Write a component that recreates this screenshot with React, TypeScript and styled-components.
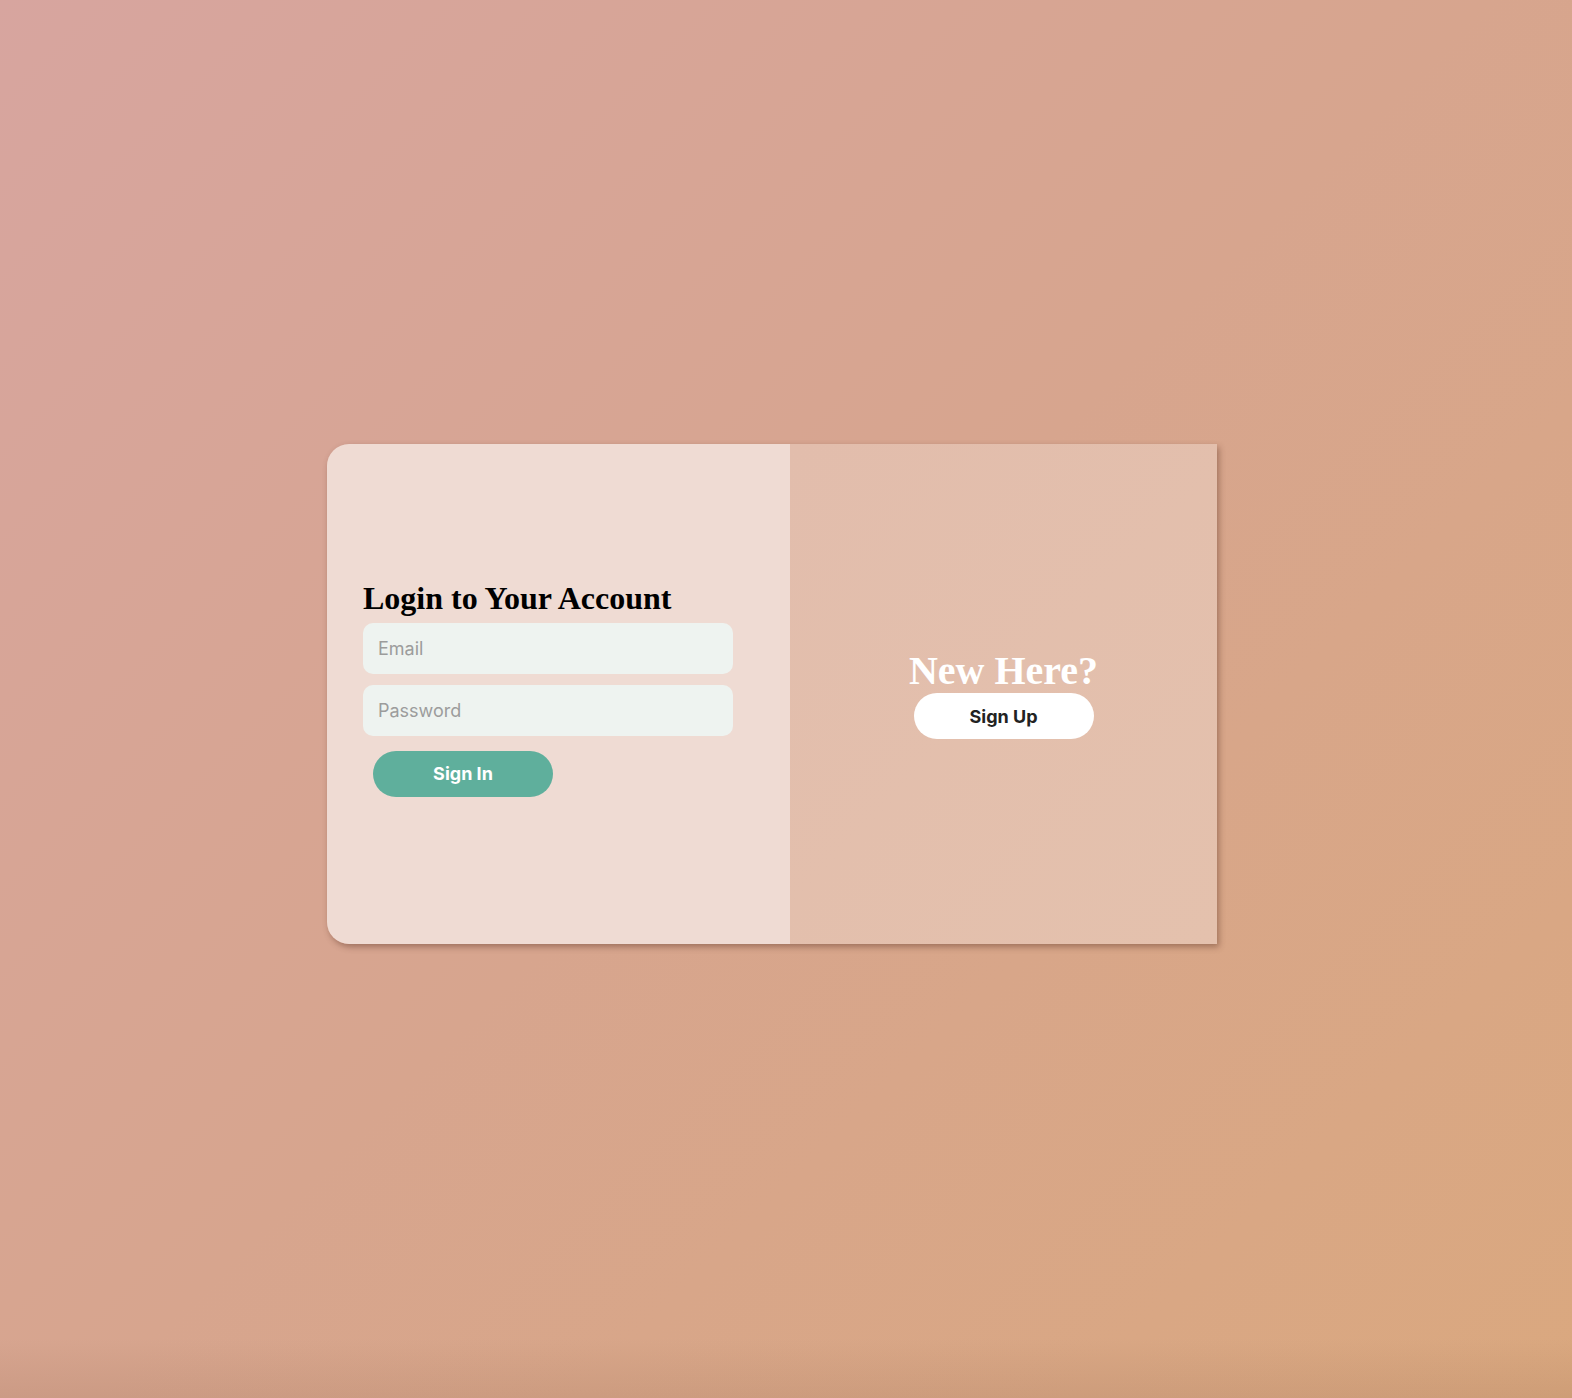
import React from "react";
import styled, { createGlobalStyle } from "styled-components";

const Global = createGlobalStyle`
  html, body { margin: 0; padding: 0; }
  body {
    font-family: "Liberation Serif", serif;
  }
  #root { min-height: 100vh; }
`;

const Page = styled.div`
  min-height: 1398px;
  display: flex;
  align-items: center;
  justify-content: center;
  background:
    linear-gradient(to bottom, rgba(0,0,0,0) calc(100% - 60px), rgba(120,80,60,0.12) 100%),
    linear-gradient(135deg, #d7a59f 0%, #d7a58e 50%, #daa87f 100%);
  padding-right: 28px;
  box-sizing: border-box;
`;

const Card = styled.div`
  display: flex;
  width: 890px;
  height: 500px;
  border-radius: 22px 0 0 22px;
  box-shadow: 2px 3px 6px rgba(90, 50, 35, 0.45);
  margin-top: -10px;
`;

const LeftPanel = styled.div`
  width: 463px;
  background: #efdbd3;
  border-radius: 22px 0 0 22px;
  display: flex;
  flex-direction: column;
  justify-content: center;
  padding: 0 57px 12px 36px;
  box-sizing: border-box;
`;

const RightPanel = styled.div`
  flex: 1;
  background: linear-gradient(135deg, #e2bdac 0%, #e4c1ad 100%);
  display: flex;
  flex-direction: column;
  align-items: center;
  justify-content: center;
`;

const Title = styled.h1`
  margin: 0 0 6px;
  font-family: "Liberation Serif", serif;
  font-weight: 700;
  font-size: 32px;
  line-height: normal;
  color: #000;
`;

const Input = styled.input`
  width: 370px;
  height: 51px;
  border: none;
  outline: none;
  border-radius: 10px;
  background: #eef3f0;
  padding: 0 15px;
  box-sizing: border-box;
  font-family: Inter, "Liberation Sans", sans-serif;
  font-size: 18px;
  color: #333;
  margin-bottom: 11px;
  &::placeholder { color: #9c9c9c; }
`;

const Button = styled.button<{ $variant: "primary" | "light" }>`
  width: 180px;
  height: 46px;
  border: none;
  border-radius: 23px;
  background: ${(p) => (p.$variant === "primary" ? "#5faf9c" : "#ffffff")};
  color: ${(p) => (p.$variant === "primary" ? "#ffffff" : "#222222")};
  font-family: Inter, "Liberation Sans", sans-serif;
  font-weight: 700;
  font-size: 18px;
  cursor: pointer;
`;

const SignInButton = styled(Button)`
  margin: 4px 0 0 10px;
`;

const SideTitle = styled.h2`
  margin: 0;
  font-family: "Liberation Serif", serif;
  font-weight: 700;
  font-size: 40px;
  line-height: 44px;
  color: #ffffff;
`;

export default function App() {
  return (
    <>
      <Global />
      <Page>
        <Card>
          <LeftPanel>
            <Title>Login to Your Account</Title>
            <Input type="email" placeholder="Email" />
            <Input type="password" placeholder="Password" />
            <SignInButton $variant="primary">Sign In</SignInButton>
          </LeftPanel>
          <RightPanel>
            <SideTitle>New Here?</SideTitle>
            <Button $variant="light">Sign Up</Button>
          </RightPanel>
        </Card>
      </Page>
    </>
  );
}
